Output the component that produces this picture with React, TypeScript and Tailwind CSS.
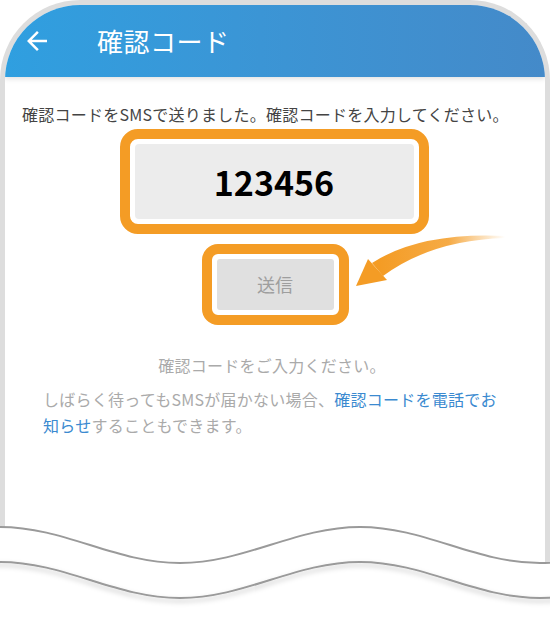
import React from 'react';

const FONT = '"Noto Sans CJK JP", "Noto Sans", sans-serif';

// 波線（画面下端の切れ目）
const wavePath = (base: number) => {
  const top = base;
  const bottom = base + 36;
  let d = `M-20,${top} L0,${top}`;
  for (let x = 0; x < 560; x += 360) {
    d += ` C${x + 65},${top} ${x + 115},${bottom} ${x + 180},${bottom}`;
    d += ` C${x + 245},${bottom} ${x + 295},${top} ${x + 360},${top}`;
  }
  return d;
};

const BackIcon = () => (
  <svg width="30" height="30" viewBox="0 0 24 24" fill="white">
    <path d="M20 11H7.83l5.59-5.59L12 4l-8 8 8 8 1.41-1.41L7.83 13H20v-2z" />
  </svg>
);

export default function App() {
  const top = wavePath(527);
  const lower = wavePath(562);

  return (
    <div className="relative w-[550px] h-[626px] overflow-hidden bg-white" style={{ fontFamily: FONT }}>
      {/* 端末フレーム */}
      <div className="h-[600px] border-[5px] border-b-0 border-[#dddddd] rounded-t-[80px] overflow-hidden bg-white">
        {/* ヘッダー */}
        <div className="relative z-10 h-[72px] flex items-center bg-gradient-to-r from-[#2f9fe0] to-[#448ac9] shadow-[0_2px_5px_rgba(0,0,0,0.12)]">
          <div className="ml-[17px]">
            <BackIcon />
          </div>
          <h1 className="ml-[45px] text-[26px] leading-none text-white font-normal tracking-[0.5px]">確認コード</h1>
        </div>

        {/* 本文 */}
        <div className="pt-[25px]">
          <p className="pl-[17px] text-[16px] leading-[24px] text-[#444444] whitespace-nowrap tracking-[0.25px]">
            確認コードをSMSで送りました。確認コードを入力してください。
          </p>

          <div className="flex flex-col items-center">
            <div className="mt-[3px] ml-[-2px] w-[309px] h-[105px] p-[5px] border-[10px] border-[#f49c25] rounded-[18px] bg-white">
              <div className="w-full h-full rounded-[4px] bg-[#ececec] flex items-center justify-center">
                <span className="text-[34px] font-semibold leading-none text-black">123456</span>
              </div>
            </div>

            <div className="mt-[10px] w-[147px] h-[81px] p-[5px] border-[10px] border-[#f49c25] rounded-[16px] bg-white">
              <button className="w-full h-full rounded-[3px] bg-[#e0e0e0] text-[18px] text-[#9e9e9e]">送信</button>
            </div>

            <p className="mt-[28px] ml-[-6px] text-[16px] leading-[24px] text-[#aaaaaa] tracking-[0.25px]">
              確認コードをご入力ください。
            </p>
          </div>

          <p className="mt-[9px] pl-[38px] pr-[46px] text-[16px] leading-[26px] text-[#aaaaaa] tracking-[0.25px]">
            しばらく待ってもSMSが届かない場合、
            <span className="text-[#3b8ad0]">確認コードを電話でお知らせ</span>
            することもできます。
          </p>
        </div>
      </div>

      {/* 矢印 */}
      <svg className="absolute inset-0 pointer-events-none" width="550" height="626">
        <defs>
          <linearGradient id="arrowFade" x1="380" y1="0" x2="505" y2="0" gradientUnits="userSpaceOnUse">
            <stop offset="0" stopColor="#f49c25" stopOpacity="1" />
            <stop offset="0.55" stopColor="#f49c25" stopOpacity="0.85" />
            <stop offset="1" stopColor="#f49c25" stopOpacity="0" />
          </linearGradient>
        </defs>
        <path d="M372,263 Q420,232 505,236 L505,238 Q432,240 383,276 Z" fill="url(#arrowFade)" />
        <path d="M356,286 L368,259 L387,280 Z" fill="#f49c25" />
      </svg>

      {/* 下端の波 */}
      <svg className="absolute inset-0 pointer-events-none" width="550" height="626">
        <defs>
          <filter id="waveShadow" x="-10%" y="-50%" width="120%" height="200%">
            <feDropShadow dx="0" dy="3" stdDeviation="2.5" floodColor="#000000" floodOpacity="0.25" />
          </filter>
        </defs>
        <path d={`${top} L580,640 L-20,640 Z`} fill="white" />
        <path d={top} fill="none" stroke="#9a9a9a" strokeWidth="2" />
        <path d={lower} fill="none" stroke="#9a9a9a" strokeWidth="2" filter="url(#waveShadow)" />
      </svg>
    </div>
  );
}
